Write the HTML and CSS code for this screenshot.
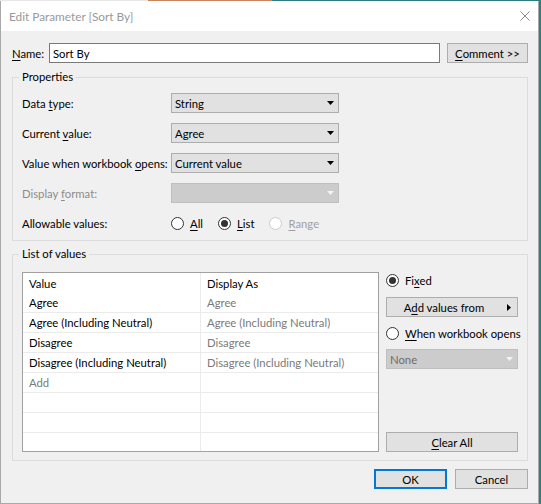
FILE: index.html
```html
<!DOCTYPE html>
<html>
<head>
<meta charset="utf-8">
<title>Edit Parameter [Sort By]</title>
<link rel="stylesheet" href="styles.css">
</head>
<body>
<div class="window">
  <div class="titlebar">
    <span class="title">Edit Parameter [Sort By]</span>
    <svg class="close" width="10" height="10" viewBox="0 0 10 10"><path d="M0.5 0.5 L9.5 9.5 M9.5 0.5 L0.5 9.5" stroke="#8a8a8a" stroke-width="1" fill="none"/></svg>
  </div>
  <div class="content">
    <div class="name-row">
      <span class="name-label"><u>N</u>ame:</span>
      <div class="textbox">Sort By</div>
      <div class="btn comment"><u>C</u>omment &gt;&gt;</div>
    </div>

    <fieldset class="group props">
      <legend>Properties</legend>
      <div class="prop-row">
        <span class="lbl">Data <u>t</u>ype:</span>
        <div class="select"><span>String</span><svg class="dd" width="7" height="4" viewBox="0 0 7 4"><path d="M0 0 H7 L3.5 4 Z" fill="#000"/></svg></div>
      </div>
      <div class="prop-row">
        <span class="lbl">Current <u>v</u>alue:</span>
        <div class="select"><span>Agree</span><svg class="dd" width="7" height="4" viewBox="0 0 7 4"><path d="M0 0 H7 L3.5 4 Z" fill="#000"/></svg></div>
      </div>
      <div class="prop-row">
        <span class="lbl">Value when workbook <u>o</u>pens:</span>
        <div class="select"><span>Current value</span><svg class="dd" width="7" height="4" viewBox="0 0 7 4"><path d="M0 0 H7 L3.5 4 Z" fill="#000"/></svg></div>
      </div>
      <div class="prop-row">
        <span class="lbl disabled">Display <u>f</u>ormat:</span>
        <div class="select off"><span></span><svg class="dd" width="7" height="4" viewBox="0 0 7 4"><path d="M0 0 H7 L3.5 4 Z" fill="#f4f4f4"/></svg></div>
      </div>
      <div class="prop-row">
        <span class="lbl">Allowable values:</span>
        <div class="radios">
          <span class="opt"><span class="rb"></span><span><u>A</u>ll</span></span>
          <span class="opt"><span class="rb on"></span><span><u>L</u>ist</span></span>
          <span class="opt dis"><span class="rb"></span><span><u>R</u>ange</span></span>
        </div>
      </div>
    </fieldset>

    <fieldset class="group list">
      <legend>List of values</legend>
      <div class="list-body">
        <div class="table">
          <div class="c h">Value</div><div class="c h">Display As</div>
          <div class="c r">Agree</div><div class="c r g">Agree</div>
          <div class="c r">Agree (Including Neutral)</div><div class="c r g">Agree (Including Neutral)</div>
          <div class="c r">Disagree</div><div class="c r g">Disagree</div>
          <div class="c r">Disagree (Including Neutral)</div><div class="c r g">Disagree (Including Neutral)</div>
          <div class="c r g">Add</div><div class="c r"></div>
          <div class="c r"></div><div class="c r"></div>
          <div class="c r"></div><div class="c r"></div>
          <div class="c r"></div><div class="c r"></div>
        </div>
        <div class="side">
          <div class="opt side-opt"><span class="rb on"></span><span>Fi<u>x</u>ed</span></div>
          <div class="btn addfrom"><span class="bt">A<u>d</u>d values from</span><svg width="4" height="7" viewBox="0 0 4 7"><path d="M0 0 L4 3.5 L0 7 Z" fill="#000"/></svg></div>
          <div class="opt side-opt when"><span class="rb"></span><span><u>W</u>hen workbook opens</span></div>
          <div class="select off none"><span>None</span><svg class="dd" width="7" height="4" viewBox="0 0 7 4"><path d="M0 0 H7 L3.5 4 Z" fill="#f4f4f4"/></svg></div>
          <div class="btn clear"><u>C</u>lear All</div>
        </div>
      </div>
    </fieldset>

    <div class="footer">
      <div class="btn ok">OK</div>
      <div class="btn cancel">Cancel</div>
    </div>
  </div>
</div>
</body>
</html>
```
FILE: styles.css
```css
* { box-sizing: border-box; }
html, body { margin: 0; padding: 0; }
body {
  width: 541px;
  height: 504px;
  overflow: hidden;
  background:
    linear-gradient(to right, #e6e6e6 0 148px, #c8845c 148px 272px, #2e7d84 272px) top left / 100% 1px no-repeat,
    #2e7d84;
  font-family: Lato, "Liberation Sans", sans-serif;
  font-size: 11.3px;
  color: #000;
}
u { text-decoration: underline; text-underline-offset: 2px; }

.window {
  margin-top: 1px;
  width: 539px;
  height: 503px;
  background: #f0f0f0;
  border: 1px solid #a9a9a9;
  border-top: none;
  display: flex;
  flex-direction: column;
}
.titlebar {
  height: 30px;
  background: #fff;
  display: flex;
  align-items: center;
  justify-content: space-between;
  padding: 0 8px;
  color: #999;
  font-size: 11.8px;
  flex: none;
}
.close { display: block; }

.content {
  flex: 1;
  padding: 12px 10px 0 11px;
  display: flex;
  flex-direction: column;
}

.name-row { display: flex; align-items: center; height: 20px; flex: none; }
.name-label { width: 37px; }
.textbox {
  flex: 1;
  height: 20px;
  border: 1px solid #7a7a7a;
  background: #fff;
  padding-left: 3px;
  display: flex;
  align-items: center;
}
.btn {
  height: 20px;
  border: 1px solid #adadad;
  background: #e1e1e1;
  display: flex;
  align-items: center;
  justify-content: center;
  white-space: nowrap;
}
.comment { width: 81px; margin-left: 7px; }

fieldset.group {
  margin: 0;
  min-width: 0;
  border: 1px solid #dcdcdc;
  padding: 8px 9px 7px 9px;
  flex: none;
}
fieldset.group legend {
  padding: 0 3px;
  margin-left: -3px;
  line-height: 16px;
  height: 16px;
}
fieldset.props { margin-top: 6px; }
fieldset.list { margin-top: 5px; padding-top: 10px; padding-bottom: 8px; }

.prop-row { display: flex; align-items: center; height: 20px; }
.prop-row + .prop-row { margin-top: 10px; }
.lbl { width: 149px; white-space: nowrap; }
.disabled { color: #8c8c8c; }

.select {
  width: 168px;
  height: 20px;
  border: 1px solid #adadad;
  background: #e1e1e1;
  display: flex;
  align-items: center;
  justify-content: space-between;
  padding: 0 4px 0 3px;
}
.select.off { background: #cccccc; border-color: #bfbfbf; color: #6d6d6d; }
.dd { display: block; }

.radios { display: flex; align-items: center; }
.opt { display: flex; align-items: center; margin-right: 15px; white-space: nowrap; }
.rb {
  width: 13px;
  height: 13px;
  border: 1px solid #333;
  border-radius: 50%;
  background: #fff;
  display: inline-flex;
  align-items: center;
  justify-content: center;
  margin-right: 6px;
  flex: none;
}
.rb.on::after {
  content: "";
  width: 7px;
  height: 7px;
  border-radius: 50%;
  background: #333;
}
.opt.dis { color: #a0a0a0; }
.opt.dis .rb { border-color: #cccccc; }

.list-body { display: flex; }
.table {
  width: 357px;
  height: 180px;
  border: 1px solid #a0a0a0;
  background: #fff;
  overflow: hidden;
  display: grid;
  grid-template-columns: 178px 1fr;
  grid-auto-rows: 20px;
  align-content: start;
  flex: none;
}
.c {
  padding-left: 6px;
  display: flex;
  align-items: center;
  white-space: nowrap;
  overflow: hidden;
}
.c:nth-child(odd) { border-right: 1px solid #ebebeb; }
.c.r { border-bottom: 1px solid #ebebeb; }
.c.g { color: #7a7a7a; }

.side {
  width: 132px;
  margin-left: 7px;
  display: flex;
  flex-direction: column;
}
.side-opt { height: 16px; margin-right: 0; }
.addfrom { margin-top: 9px; justify-content: space-between; padding: 0 6px 0 0; }
.addfrom .bt { flex: 1; text-align: center; padding-right: 6px; }
.addfrom svg { display: block; }
.when { margin-top: 8px; }
.none { width: 132px; margin-top: 8px; }
.clear { margin-top: auto; }

.footer {
  display: flex;
  justify-content: flex-end;
  margin-top: 8px;
  flex: none;
}
.footer .btn { width: 73px; }
.ok { border: 2px solid #0078d7; }
.cancel { margin-left: 8px; }
```
